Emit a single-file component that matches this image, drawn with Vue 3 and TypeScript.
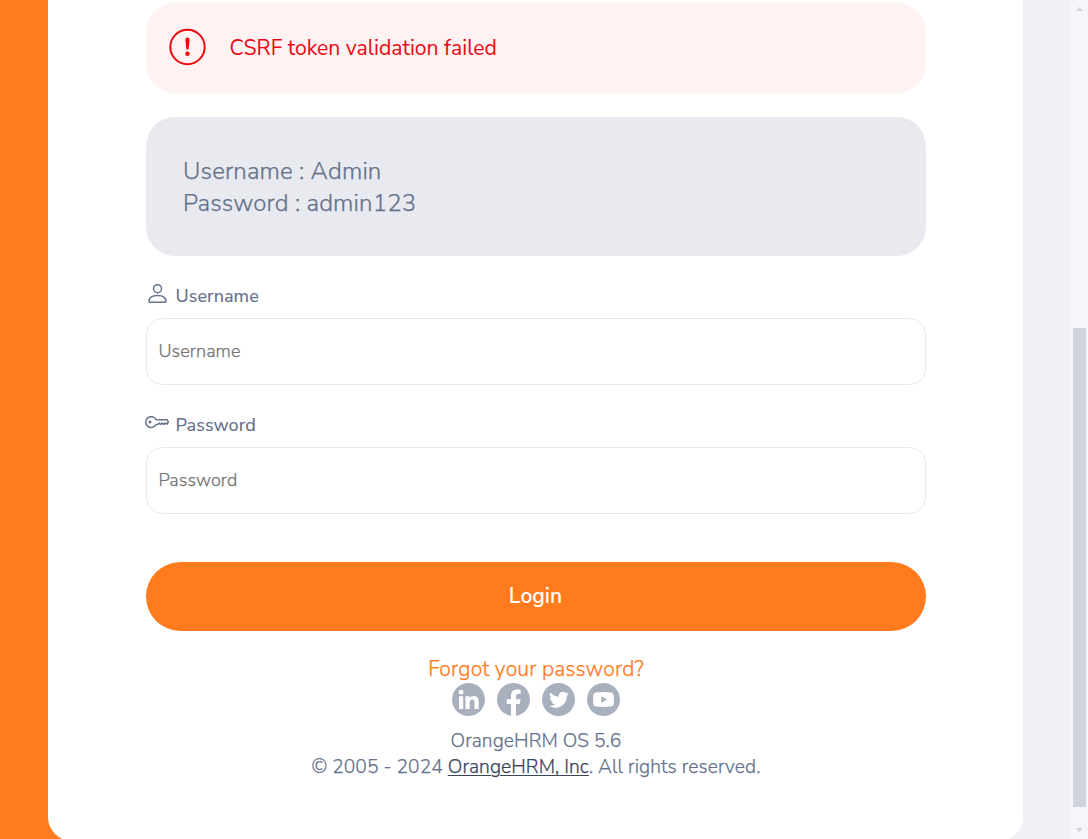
<script setup lang="ts">
interface Field {
  name: string
  type: string
  icon: 'person' | 'key'
}

const fields: Field[] = [
  { name: 'Username', type: 'text', icon: 'person' },
  { name: 'Password', type: 'password', icon: 'key' },
]
</script>

<template>
  <div class="page">
    <main class="card">
      <div class="alert" role="alert">
        <svg class="alert-icon" viewBox="0 0 38 38">
          <circle cx="19.500" cy="19" r="17.2" fill="none" stroke="#eb0910" stroke-width="2" />
          <path d="M17.400 11.600a2.100 2.100 0 0 1 4.200 0l-.9 8.900a1.200 1.200 0 0 1-2.400 0z" fill="#eb0910" />
          <circle cx="19.500" cy="25.800" r="2.200" fill="#eb0910" />
        </svg>
        <span class="alert-text">CSRF token validation failed</span>
      </div>

      <div class="demo">
        <p>Username : Admin</p>
        <p>Password : admin123</p>
      </div>

      <form class="form" @submit.prevent>
        <div v-for="f in fields" :key="f.name" class="field">
          <label class="label" :for="f.name">
            <svg v-if="f.icon === 'person'" class="label-icon" viewBox="0 0 24 24">
              <circle cx="12.500" cy="7.700" r="4" />
              <path d="M4.100 20.500c0-4 3.600-6 8.400-6s8.400 2 8.400 6c0 .4-.3.7-.8.7H4.900c-.5 0-.8-.3-.8-.7z" />
            </svg>
            <svg v-else class="label-icon" viewBox="0 0 24 24">
              <path d="M11 9.700h10.800l1.700 2.200-1.700 2.300-1.600-1.100-1.500 1.300-1.500-1.300-1.500 1.300-1.500-1.300-1.300 1.400H11a5.400 5.400 0 1 1 0-4.800z" />
              <circle cx="5" cy="12.100" r="1.500" class="dot" />
            </svg>
            <span>{{ f.name }}</span>
          </label>
          <input :id="f.name" class="input" :type="f.type" :placeholder="f.name" />
        </div>
        <button class="login" type="submit">Login</button>
      </form>

      <a class="forgot">Forgot your password?</a>

      <div class="social">
        <svg viewBox="0 0 33 33">
          <circle cx="16.500" cy="16.500" r="16.500" fill="#a9b0bd" />
          <circle cx="9.100" cy="9.200" r="2.400" fill="#fff" />
          <path d="M7 13.200h4.200V26H7zM13.500 13.200h4V15c.7-1.200 2.100-2.100 4.200-2.100 4 0 5 2.500 5 6.300V26h-4.200v-6.200c0-1.800-.3-3.300-2.200-3.300-2 0-2.600 1.400-2.600 3.200V26h-4.200z" fill="#fff" />
        </svg>
        <svg viewBox="0 0 33 33">
          <circle cx="16.500" cy="16.500" r="16.500" fill="#a9b0bd" />
          <path d="M14 33V21H9.800v-4.800H14v-3.600c0-4.200 2.500-6.200 6.200-6.200 1.800 0 3.500.3 3.500.3v4.100h-2c-2.100 0-2.700 1.200-2.700 2.500v2.900h4.500l-.7 4.800H19v12z" fill="#fff" />
        </svg>
        <svg viewBox="0 0 33 33">
          <circle cx="16.500" cy="16.500" r="16.500" fill="#a9b0bd" />
          <path transform="translate(7.200 7) scale(.82)" d="M23.950 4.570a10 10 0 0 1-2.820.78 4.960 4.960 0 0 0 2.160-2.730 9.900 9.900 0 0 1-3.120 1.190 4.920 4.920 0 0 0-8.390 4.490A13.970 13.970 0 0 1 1.640 3.160a4.920 4.920 0 0 0 1.520 6.570 4.900 4.900 0 0 1-2.230-.61v.06a4.920 4.920 0 0 0 3.950 4.830 5 5 0 0 1-2.210.08 4.940 4.940 0 0 0 4.600 3.420A9.870 9.870 0 0 1 0 19.540a13.990 13.990 0 0 0 7.550 2.210c9.050 0 14-7.500 14-13.990l-.02-.63a10 10 0 0 0 2.420-2.560z" fill="#fff" />
        </svg>
        <svg viewBox="0 0 33 33">
          <circle cx="16.500" cy="16.500" r="16.500" fill="#a9b0bd" />
          <path fill-rule="evenodd" d="M9.500 9.400Q16.500 8.800 23.500 9.400C26 9.600 26.700 11 26.800 13q.2 3.500 0 7c-.1 2-.8 3.400-3.300 3.600q-7 .6-14 0C7 23.400 6.300 22 6.200 20q-.2-3.500 0-7c.1-2 .8-3.400 3.300-3.600zM14.300 13.200v6.600l5.900-3.300z" fill="#fff" />
        </svg>
      </div>

      <footer class="footer">
        <p>OrangeHRM OS 5.6</p>
        <p>© 2005 - 2024 <a>OrangeHRM, Inc</a>. All rights reserved.</p>
      </footer>
    </main>

    <aside class="scrollbar">
      <svg class="arrow" viewBox="0 0 7 4"><path d="M0 4h7L3.500 0z" /></svg>
      <div class="thumb"></div>
      <svg class="arrow" viewBox="0 0 7 4"><path d="M0 0h7L3.500 4z" /></svg>
    </aside>
  </div>
</template>

<style>
body {
  margin: 0;
  overflow: hidden;
}
</style>

<style scoped>
.page {
  box-sizing: border-box;
  display: flex;
  width: 1088px;
  height: 839px;
  overflow: hidden;
  padding-left: 48px;
  background: linear-gradient(90deg, #ff7b1d 0 500px, #f0f1f6 500px);
  font-family: "Nunito Sans", Nunito, Lato, "Open Sans", sans-serif;
  font-weight: 300;
  color: #64728c;
}
p {
  margin: 0;
}
.card {
  box-sizing: border-box;
  display: flex;
  flex-direction: column;
  width: 975px;
  height: 841px;
  flex: none;
  padding: 3px 97px 0 98px;
  background: #fff;
  border-radius: 0 0 24px 24px;
}
.alert {
  display: flex;
  align-items: center;
  height: 90px;
  box-sizing: border-box;
  padding: 0 22px 2px;
  border-radius: 29px;
  background: #fff2f2;
  color: #eb0910;
}
.alert-icon {
  width: 38px;
  height: 38px;
  margin-right: 23.500px;
}
.alert-text {
  padding-top: 2px;
  font-size: 21.180px;
  font-weight: 400;
  white-space: nowrap;
}
.demo {
  box-sizing: border-box;
  height: 139px;
  margin-top: 24px;
  padding: 38px 37px;
  border-radius: 29px;
  background: #e8eaef;
  font-size: 24px;
  line-height: 32px;
  letter-spacing: 0.150px;
}
.demo,
.forgot,
.footer,
.input {
  -webkit-text-stroke: 0.250px;
}
.form {
  display: flex;
  flex-direction: column;
}
.field {
  height: 129px;
  padding-top: 24px;
  box-sizing: border-box;
}
.label {
  display: flex;
  align-items: center;
  height: 32px;
  font-size: 18px;
  font-weight: 500;
  line-height: 32px;
  letter-spacing: 0.030px;
}
.label-icon {
  width: 24px;
  height: 24px;
  margin: -7px 6.500px 0 -1px;
  fill: none;
  stroke: #64728c;
  stroke-width: 1.500;
  stroke-linejoin: round;
}
.dot {
  fill: #64728c;
  stroke: none;
}
.input {
  display: block;
  box-sizing: border-box;
  width: 780px;
  height: 67px;
  margin-top: 6px;
  padding: 0 12px 2px 11.500px;
  border: 1px solid #e8eaef;
  border-radius: 16px;
  outline: none;
  background: #fff;
  font: 300 18px "Nunito Sans", Nunito, Lato, "Open Sans", sans-serif;
  letter-spacing: 0.060px;
}
.input::placeholder {
  color: #757575;
  opacity: 1;
}
.login {
  height: 69px;
  margin-top: 48px;
  padding: 0 1px 2px 0;
  border: 0;
  border-radius: 35px;
  background: #ff7b1d;
  color: #fff;
  font: 600 21.120px "Nunito Sans", Nunito, Lato, "Open Sans", sans-serif;
}
.forgot {
  margin-top: 24px;
  height: 28px;
  line-height: 28px;
  text-align: center;
  color: #ff7b1d;
  font-size: 21.120px;
  letter-spacing: 0.140px;
}
.social {
  display: flex;
  justify-content: center;
  gap: 12px;
  height: 33px;
}
.social svg {
  width: 33px;
  height: 33px;
}
.footer {
  margin-top: 12px;
  text-align: center;
  font-size: 19.200px;
  line-height: 26px;
  letter-spacing: 0.085px;
}
.footer a {
  color: #38455d;
  text-decoration: underline;
  text-decoration-thickness: 1px;
  text-underline-offset: 2px;
}
.scrollbar {
  display: flex;
  flex-direction: column;
  align-items: center;
  box-sizing: border-box;
  width: 17px;
  height: 839px;
  margin-left: 48px;
  padding: 7px 0;
  background: #f5f5fb;
}
.arrow {
  width: 7px;
  height: 4px;
  fill: #ced3de;
}
.thumb {
  width: 13px;
  height: 479px;
  margin: 317px 0 21px;
  background: #ced3de;
}
</style>
